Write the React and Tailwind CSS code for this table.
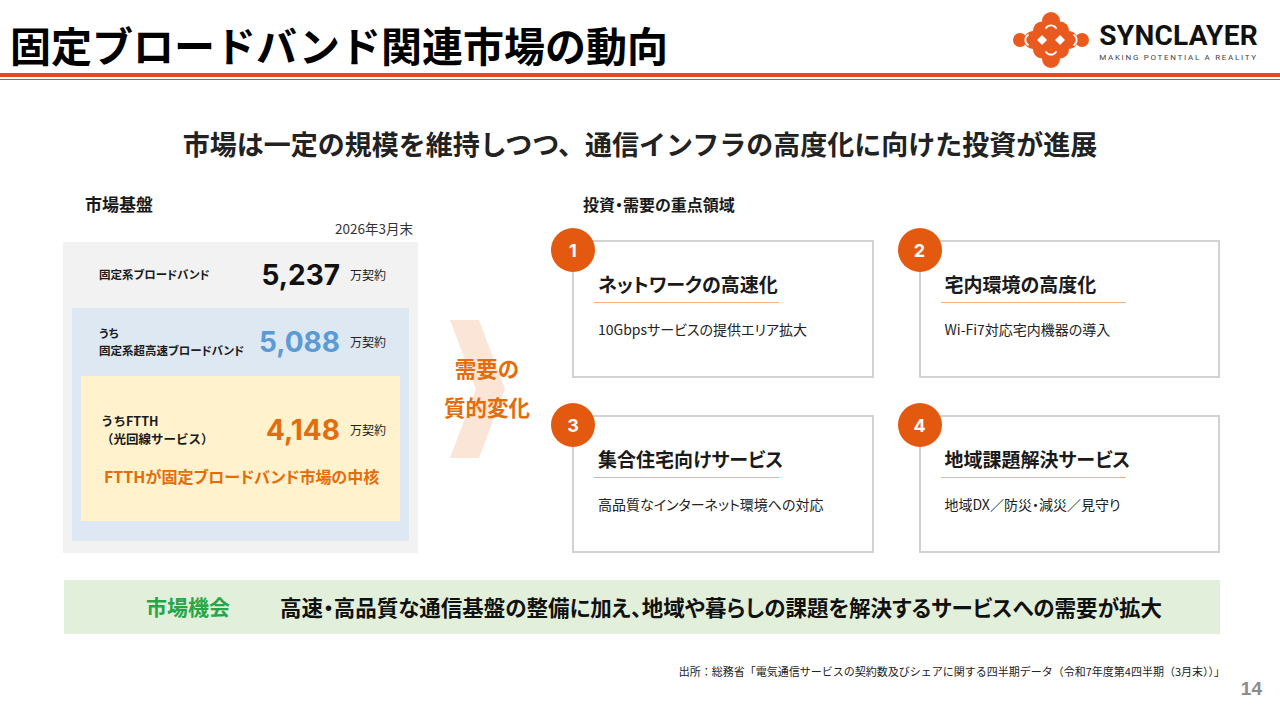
import React from 'react';

const cards = [
  { no: 1, title: 'ネットワークの高速化', desc: '10Gbpsサービスの提供エリア拡大' },
  { no: 2, title: '宅内環境の高度化', desc: 'Wi-Fi7対応宅内機器の導入' },
  { no: 3, title: '集合住宅向けサービス', desc: '高品質なインターネット環境への対応' },
  { no: 4, title: '地域課題解決サービス', desc: '地域DX／防災・減災／見守り' },
];

const LogoMark = () => (
  <svg width="76" height="56" viewBox="0 0 76 56">
    <g fill="#ea5a1e">
      <circle cx="38" cy="9" r="9" />
      <circle cx="38" cy="47" r="9" />
      <circle cx="29" cy="18.5" r="9" />
      <circle cx="47" cy="18.5" r="9" />
      <circle cx="29" cy="37.5" r="9" />
      <circle cx="47" cy="37.5" r="9" />
      <circle cx="38" cy="28" r="9" />
      <circle cx="20" cy="28" r="9" />
      <circle cx="56" cy="28" r="9" />
      <circle cx="7" cy="28" r="7" />
      <circle cx="69" cy="28" r="7" />
    </g>
    <g fill="#fff">
      <polygon points="29,23 34,28 29,33 24,28" />
      <polygon points="47,23 52,28 47,33 42,28" />
    </g>
    <g fill="none" stroke="#fff" strokeWidth="1.8" strokeLinecap="round">
      <path d="M33,16 A6,6 0 0 1 43,16" />
      <path d="M33,40 A6,6 0 0 0 43,40" />
      <path d="M15,23 A6,6 0 0 0 15,33" />
      <path d="M61,23 A6,6 0 0 1 61,33" />
    </g>
  </svg>
);

// 数値＋単位の行
const Figure = ({ value, color }) => (
  <>
    <span className={`w-[85px] text-right font-['Inter',sans-serif] font-bold text-[28px] leading-none ${color}`}>{value}</span>
    <span className="ml-[10px] text-[12px] text-[#222]">万契約</span>
  </>
);

export default function App() {
  return (
    <div className="w-[1280px] h-[720px] bg-white overflow-hidden font-['Noto_Sans_CJK_JP',sans-serif] text-[#1a1a1a]">
      {/* header */}
      <div className="flex justify-between h-[73px]">
        <h1 className="pl-[10px] pt-[20px] text-[41px] leading-[48px] font-bold text-black">固定ブロードバンド関連市場の動向</h1>
        <div className="flex items-start pt-[12px] pr-[22px] gap-[10px]">
          <LogoMark />
          <div className="pt-[11px] font-['Roboto',sans-serif]">
            <div className="text-[28px] font-bold leading-[26px] text-[#111] tracking-[0.3px]">SYNCLAYER</div>
            <div className="mt-[4px] text-[8px] leading-[10px] tracking-[1.7px] text-[#444]">MAKING POTENTIAL A REALITY</div>
          </div>
        </div>
      </div>
      <div className="h-[4px] bg-[#e9471f]" />
      <div className="mt-[2px] h-[1px] bg-[#e9471f]" />

      <p className="mt-[48px] text-center text-[27px] leading-[32px] font-bold text-[#222]">
        市場は一定の規模を維持しつつ、通信インフラの高度化に向けた投資が進展
      </p>

      {/* main */}
      <div className="mt-[32px] flex pl-[63px]">
        {/* 市場基盤 */}
        <div className="w-[355px] flex-none">
          <h2 className="pl-[22px] text-[17px] leading-[24px] font-bold">市場基盤</h2>
          <div className="mt-[4px] pr-[5px] text-right text-[13.5px] leading-[16px] text-[#333]">2026年3月末</div>
          <div className="mt-[6px] bg-[#f2f2f2] pb-[12px]">
            <div className="h-[66px] flex items-center pl-[36px]">
              <span className="w-[156px] text-[11.5px] font-bold [font-feature-settings:'palt']">固定系ブロードバンド</span>
              <Figure value="5,237" color="text-[#111]" />
            </div>
            <div className="mx-[9px] bg-[#dde8f3] pb-[20px]">
              <div className="h-[68px] flex items-center pl-[27px]">
                <span className="w-[156px] text-[11.5px] leading-[17px] font-bold [font-feature-settings:'palt']">
                  うち<br />固定系超高速ブロードバンド
                </span>
                <Figure value="5,088" color="text-[#5b9bd5]" />
              </div>
              <div className="mx-[9px] h-[145px] bg-[#fff2cc] pt-[35px]">
                <div className="h-[38px] flex items-center pl-[20px]">
                  <span className="w-[154px] text-[12.5px] leading-[18px] font-bold">
                    うちFTTH<br />（光回線サービス）
                  </span>
                  <Figure value="4,148" color="text-[#e46c0a]" />
                </div>
                <p className="mt-[15px] pl-[23px] text-[16px] leading-[24px] font-bold text-[#e46c0a] [font-feature-settings:'palt']">
                  FTTHが固定ブロードバンド市場の中核
                </p>
              </div>
            </div>
          </div>
        </div>

        {/* 矢印 */}
        <div className="relative w-[154px] flex-none">
          <svg className="absolute left-[32px] top-[128px]" width="56" height="138" viewBox="0 0 56 138">
            <polygon points="0,0 29,0 55,69 29,138 0,138 26,69" fill="#fbe5d6" />
          </svg>
          <div className="relative pt-[156px] pr-[16px] text-center text-[21.5px] leading-[39px] font-bold text-[#e46c0a]">
            需要の<br />質的変化
          </div>
        </div>

        {/* 重点領域 */}
        <div className="w-[648px] flex-none">
          <h2 className="pl-[11px] text-[16px] leading-[24px] font-bold [font-feature-settings:'palt']">投資・需要の重点領域</h2>
          <div className="mt-[24px] grid grid-cols-2 gap-x-[45px] gap-y-[37px]">
            {cards.map((c) => (
              <div key={c.no} className="relative h-[138px] border-2 border-[#d2d2d2] pt-[29px]">
                <div className="absolute left-[-23px] top-[-14px] w-[44px] h-[44px] rounded-full bg-[#e2590f] flex items-center justify-center text-white font-['Inter',sans-serif] font-bold text-[18px]">
                  {c.no}
                </div>
                <div className="pl-[24px] text-[19px] leading-[26px] font-bold [font-feature-settings:'palt']">{c.title}</div>
                <div className="ml-[20px] mt-[5px] w-[185px] h-px bg-[#f4b183]" />
                <div className="pl-[24px] mt-[16px] text-[14px] leading-[20px] text-[#222] [font-feature-settings:'palt']">{c.desc}</div>
              </div>
            ))}
          </div>
        </div>
      </div>

      {/* 市場機会 */}
      <div className="mt-[27px] ml-[64px] w-[1156px] h-[54px] bg-[#e2efda] flex items-center pl-[82px]">
        <span className="text-[21px] font-bold text-[#27a548]">市場機会</span>
        <span className="ml-[50px] text-[21.5px] font-bold text-[#111] [font-feature-settings:'palt']">
          高速・高品質な通信基盤の整備に加え、地域や暮らしの課題を解決するサービスへの需要が拡大
        </span>
      </div>

      <p className="mt-[29px] pr-[55px] text-right text-[11px] leading-[16px] text-[#222]">
        出所：総務省「電気通信サービスの契約数及びシェアに関する四半期データ（令和7年度第4四半期（3月末））」
      </p>
      <div className="pr-[18px] text-right font-['Liberation_Sans',sans-serif] font-bold text-[19px] leading-[20px] text-[#8c8c8c]">14</div>
    </div>
  );
}
